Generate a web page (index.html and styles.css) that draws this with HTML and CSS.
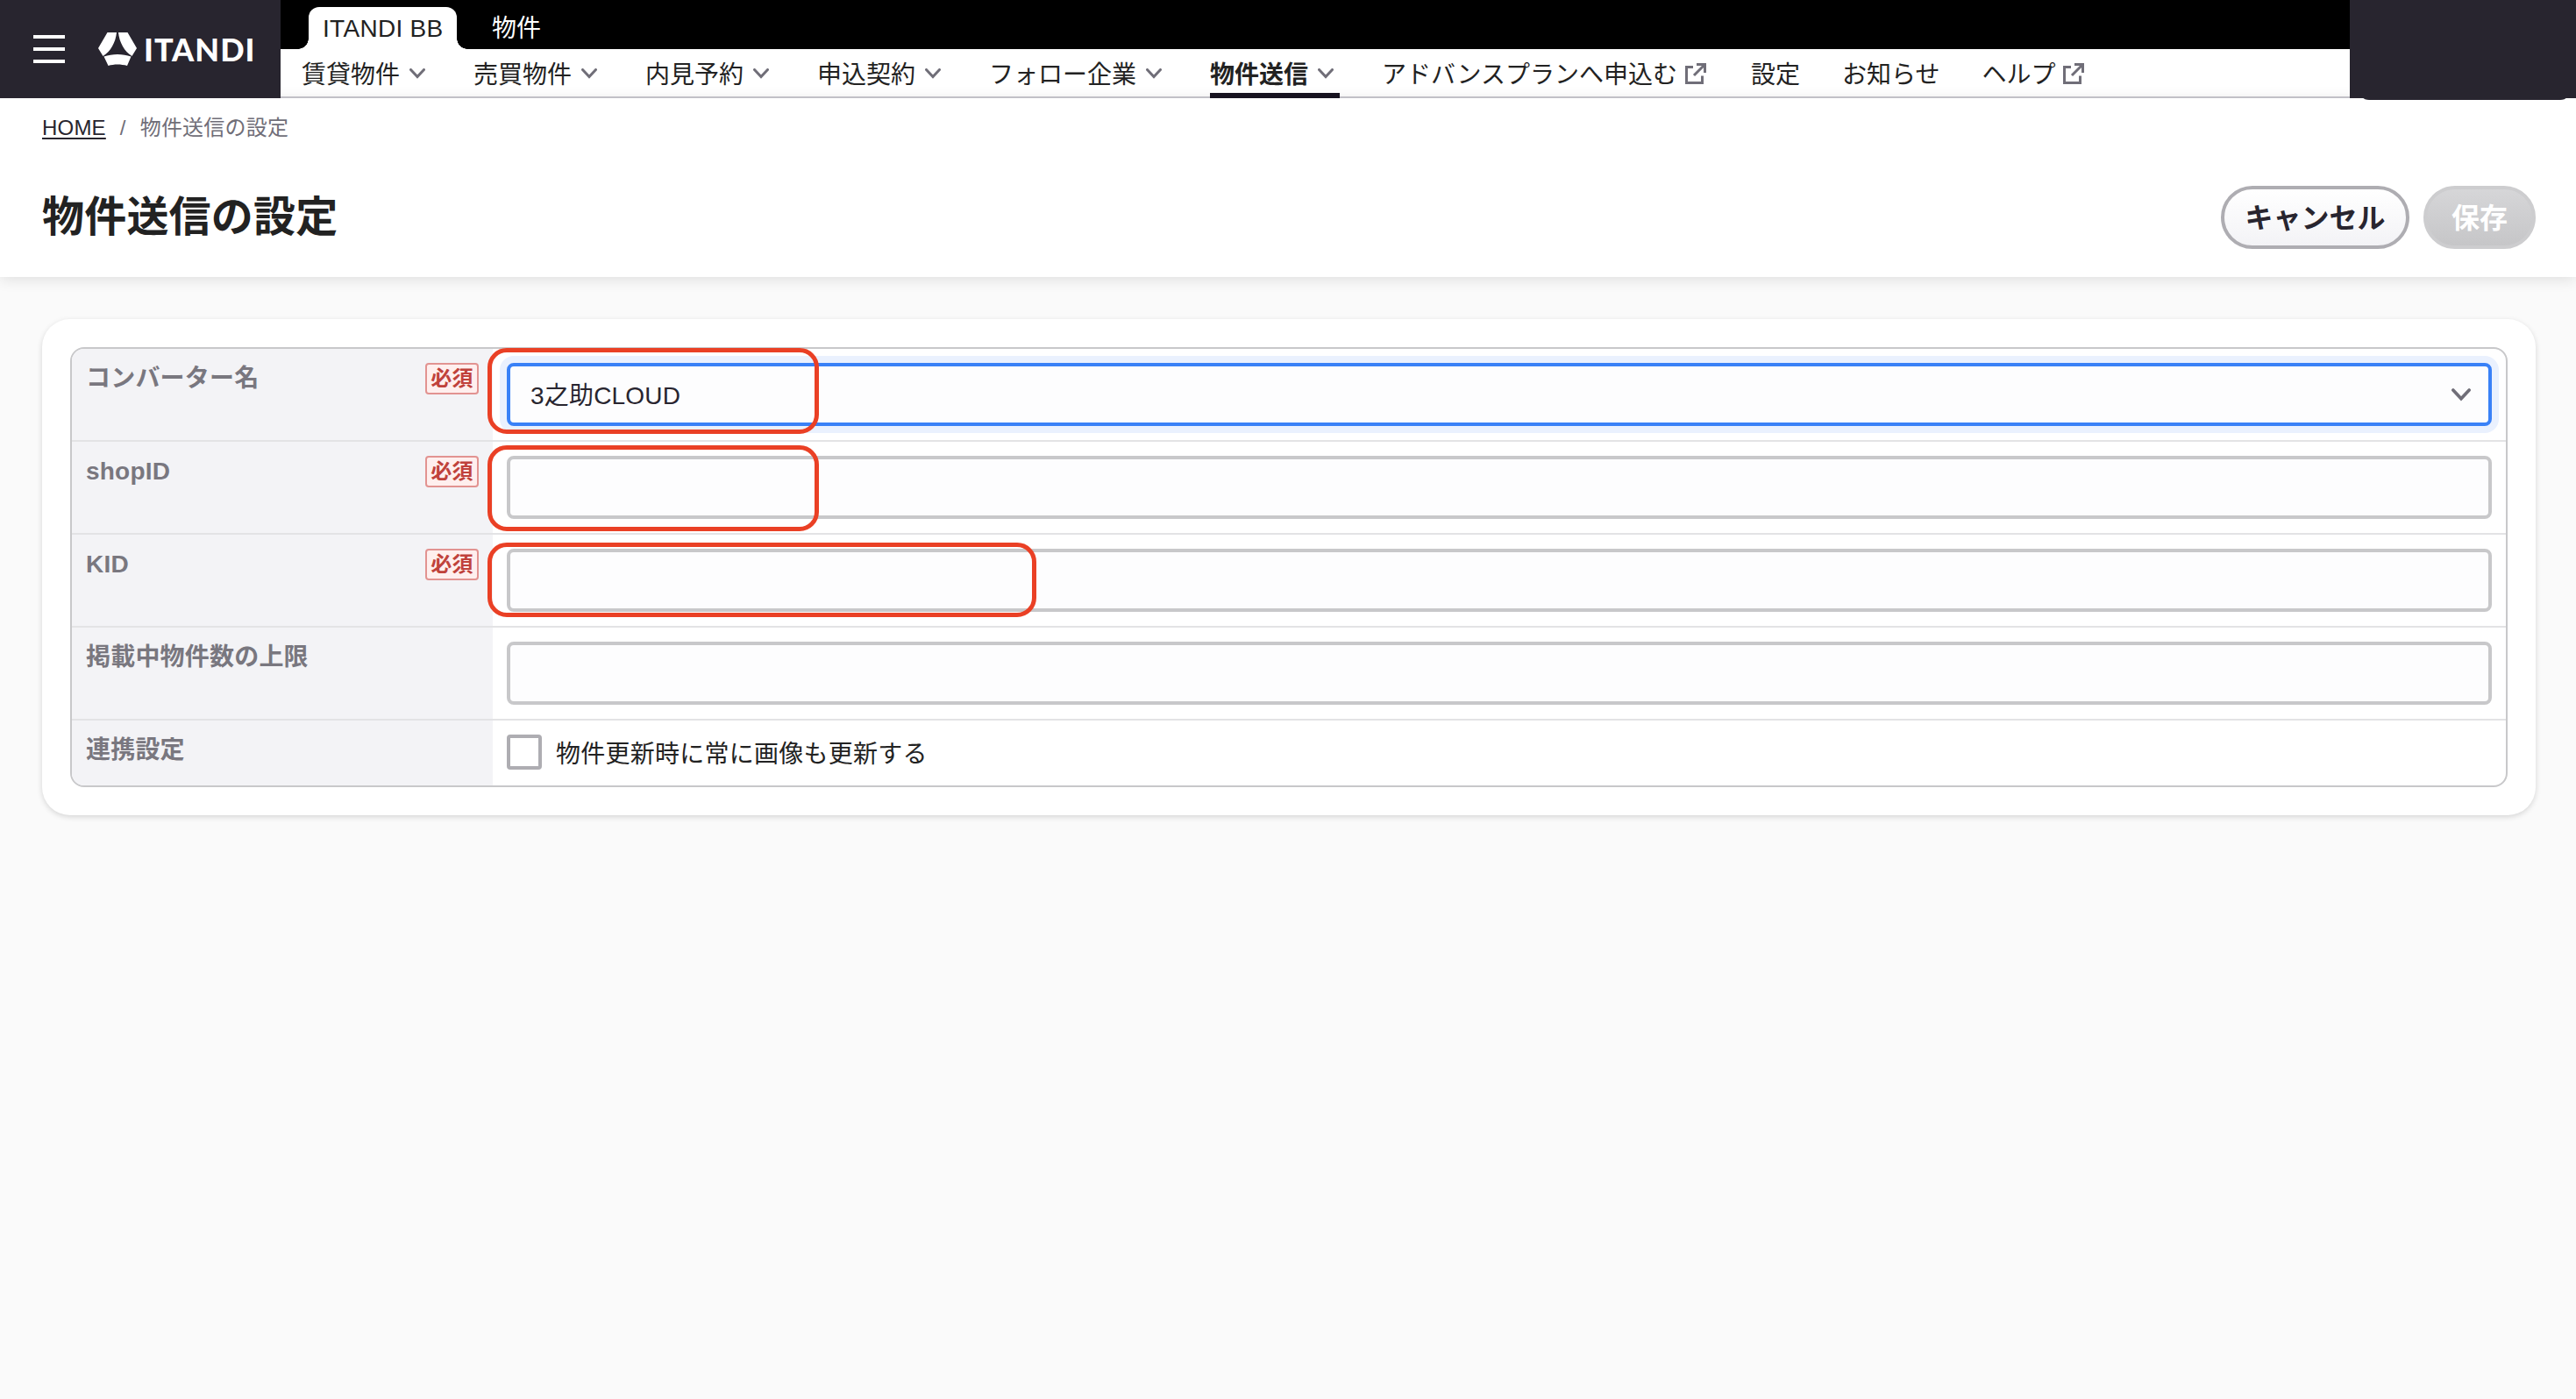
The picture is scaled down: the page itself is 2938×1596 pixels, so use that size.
FILE: index.html
```html
<!DOCTYPE html>
<html lang="ja">

<head>
    <meta charset="UTF-8">
    <meta name="viewport" content="width=device-width, initial-scale=1.0">
    <title>物件送信の設定</title>
    <link rel="stylesheet" href="styles.css">
</head>

<body>

    <svg class="symbols">
        <symbol id="chevron" viewBox="0 0 18 12">
            <path d="M1.5 1.5 L9 9.5 L16.5 1.5" fill="none" stroke="currentColor" stroke-width="3" stroke-linecap="round"/>
        </symbol>
        <symbol id="external" viewBox="0 0 24 24">
            <path d="M9 4.5 H1.5 V22.5 H19.5 V14.5 M13 1.5 H22.5 V11 M22 2 L10 14" fill="none" stroke="currentColor" stroke-width="3"/>
        </symbol>
    </svg>

    <header class="header">
        <div class="brand">
            <div class="menu-button">
                <span></span>
                <span></span>
                <span></span>
            </div>
            <svg class="logo-mark" viewBox="0 0 44 38">
                <path fill="#fff" d="M10.5 0 H21 C20 11 14 22 5.5 27 L0 18 Z M23 0 H33.5 L44 18 L38.5 27 C30 22 24 11 23 0 Z M6.5 27.500 C16 24 28 24 37.500 27.500 L33 38 C26 36 18 36 11.500 38 Z"/>
            </svg>
            <span class="logo-text">ITANDI</span>
        </div>
        <div class="header-main">
            <div class="tabs">
                <a class="tab active">ITANDI BB</a>
                <a class="tab">物件</a>
            </div>
            <nav class="nav">
                <a>賃貸物件<svg class="chevron"><use href="#chevron"/></svg></a>
                <a>売買物件<svg class="chevron"><use href="#chevron"/></svg></a>
                <a>内見予約<svg class="chevron"><use href="#chevron"/></svg></a>
                <a>申込契約<svg class="chevron"><use href="#chevron"/></svg></a>
                <a>フォロー企業<svg class="chevron"><use href="#chevron"/></svg></a>
                <a class="current">物件送信<svg class="chevron"><use href="#chevron"/></svg></a>
                <a>アドバンスプランへ申込む<svg class="external"><use href="#external"/></svg></a>
                <a>設定</a>
                <a>お知らせ</a>
                <a>ヘルプ<svg class="external"><use href="#external"/></svg></a>
            </nav>
        </div>
        <div class="account"></div>
    </header>

    <section class="page-head">
        <div class="breadcrumb">
            <a>HOME</a>
            <span class="slash">/</span>
            <span>物件送信の設定</span>
        </div>
        <div class="title-row">
            <h1>物件送信の設定</h1>
            <div class="buttons">
                <button class="cancel">キャンセル</button>
                <button class="save" disabled>保存</button>
            </div>
        </div>
    </section>

    <main class="card">
        <form class="settings">
            <div class="row">
                <div class="label">コンバーター名<span class="required">必須</span></div>
                <div class="field">
                    <div class="input select">3之助CLOUD<svg class="select-arrow"><use href="#chevron"/></svg></div>
                    <div class="mark mark-converter"></div>
                </div>
            </div>
            <div class="row">
                <div class="label">shopID<span class="required">必須</span></div>
                <div class="field">
                    <input class="input" type="text">
                    <div class="mark mark-shop"></div>
                </div>
            </div>
            <div class="row">
                <div class="label">KID<span class="required">必須</span></div>
                <div class="field">
                    <input class="input" type="text">
                    <div class="mark mark-kid"></div>
                </div>
            </div>
            <div class="row">
                <div class="label">掲載中物件数の上限</div>
                <div class="field"><input class="input" type="text"></div>
            </div>
            <div class="row">
                <div class="label">連携設定</div>
                <label class="field check"><input type="checkbox">物件更新時に常に画像も更新する</label>
            </div>
        </form>
    </main>

</body>

</html>
```
FILE: styles.css
```css
* {
    box-sizing: border-box;
}

body {
    margin: 0;
    min-height: 100vh;
    background-color: #fafafa;
    color: #222;
    font-family: "Liberation Sans", "Noto Sans CJK JP", sans-serif;
    font-size: 28px;
}

.symbols {
    display: none;
}

/* header */
.header {
    display: flex;
    height: 112px;
    background-color: #fff;
}

.brand {
    display: flex;
    align-items: center;
    width: 320px;
    padding-left: 38px;
    background-color: #28252f;
}

.menu-button {
    display: flex;
    flex-direction: column;
    gap: 10px;
    width: 36px;
    margin-right: 38px;
}

.menu-button span {
    height: 4px;
    background-color: #fff;
}

.logo-mark {
    width: 44px;
    height: 38px;
    margin-right: 8px;
}

.logo-text {
    color: #fff;
    font-family: Lato, sans-serif;
    font-size: 36px;
    font-weight: 900;
    line-height: 36px;
    letter-spacing: 1px;
}

.header-main {
    flex: 1;
}

.tabs {
    display: flex;
    height: 56px;
    padding: 8px 0 0 32px;
    background-color: #000;
}

.tab {
    height: 48px;
    padding: 0 16px;
    color: #fff;
    line-height: 50px;
}

.tab.active {
    position: relative;
    width: 169px;
    margin-right: 24px;
    border-radius: 12px 12px 0 0;
    background-color: #fff;
    color: #222;
    letter-spacing: 0.3px;
    white-space: nowrap;
}

.tab.active::before,
.tab.active::after {
    content: "";
    position: absolute;
    bottom: 0;
    width: 12px;
    height: 12px;
}

.tab.active::before {
    left: -12px;
    background: radial-gradient(circle at 0 0, #000 11.5px, #fff 12px);
}

.tab.active::after {
    right: -12px;
    background: radial-gradient(circle at 100% 0, #000 11.5px, #fff 12px);
}

.nav {
    display: flex;
    gap: 48px;
    height: 56px;
    padding-left: 24px;
    border-bottom: 2px solid #c1c0c7;
}

.nav a {
    display: flex;
    align-items: center;
    height: 56px;
    padding-bottom: 2px;
    white-space: nowrap;
}

.nav .current {
    border-bottom: 6px solid #16121f;
    padding-top: 4px;
    padding-bottom: 0;
    font-weight: bold;
}

.chevron {
    width: 18px;
    height: 12px;
    margin: 2px 7px 0 11px;
    color: #706e78;
}

.external {
    width: 24px;
    height: 24px;
    margin: 2px 3px 0 9px;
    color: #706e78;
}

.account {
    position: relative;
    width: 258px;
    background-color: #28252f;
}

.account::after {
    content: "";
    position: absolute;
    right: 6px;
    bottom: -2px;
    left: 10px;
    height: 12px;
    border-radius: 0 0 12px 12px;
    background-color: #28252f;
}

/* page head */
.page-head {
    height: 204px;
    padding: 19px 46px 0 48px;
    background-color: #fff;
    box-shadow: 0 2px 16px rgba(0, 0, 0, 0.12);
}

.breadcrumb {
    display: flex;
    height: 30px;
    color: #706e78;
    font-size: 24px;
    line-height: 30px;
    letter-spacing: 0.2px;
}

.breadcrumb a {
    color: #28252f;
    text-decoration: underline;
    text-underline-offset: 3px;
    text-decoration-thickness: 2px;
}

.slash {
    margin: 0 16px;
}

.title-row {
    display: flex;
    justify-content: space-between;
    margin-top: 51px;
}

h1 {
    margin: 0;
    font-size: 48px;
    line-height: 72px;
    letter-spacing: 0.2px;
}

.buttons {
    display: flex;
    gap: 16px;
}

button {
    height: 72px;
    padding: 0 0 4px;
    border: 4px solid #aeadb2;
    border-radius: 36px;
    font-family: inherit;
    font-size: 32px;
    font-weight: bold;
}

.cancel {
    width: 215px;
    background: linear-gradient(#fff, #f3f3f6);
    color: #28252f;
}

.save {
    width: 128px;
    border-color: #cdcdcf;
    background: linear-gradient(#d6d6d8, #c6c6c8);
    color: #fff;
}

/* settings form */
.card {
    margin: 48px 46px 0 48px;
    padding: 32px;
    border-radius: 32px;
    background-color: #fff;
    box-shadow: 0 2px 6px rgba(0, 0, 0, 0.15);
}

.settings {
    border: 2px solid #c8c8ca;
    border-radius: 16px;
}

.row {
    display: flex;
    height: 106px;
    border-bottom: 2px solid #e3e3e5;
}

.row:last-child {
    height: 74px;
    border-bottom: none;
}

.label {
    display: flex;
    justify-content: space-between;
    width: 480px;
    padding: 16px 16px 0;
    background-color: #f3f3f6;
    color: #79777f;
    font-weight: bold;
    line-height: 36px;
    letter-spacing: 0.2px;
}

.row:first-child .label {
    border-top-left-radius: 14px;
}

.row:last-child .label {
    border-bottom-left-radius: 14px;
}

.required {
    width: 61px;
    height: 36px;
    border: 2px solid #e29391;
    border-radius: 4px;
    background-color: #ffefee;
    color: #c0423b;
    font-size: 24px;
    line-height: 31px;
    text-align: center;
}

.field {
    position: relative;
    flex: 1;
    padding: 16px;
}

.input {
    display: block;
    width: 100%;
    height: 72px;
    border: 4px solid #c8c8ca;
    border-radius: 8px;
    background-color: #fdfdfe;
}

.select {
    display: flex;
    align-items: center;
    justify-content: space-between;
    padding: 0 20px 3px 23px;
    border-color: #3981f7;
    box-shadow: 0 0 0 8px #eaf1fe;
    color: #28252f;
    letter-spacing: 0.2px;
}

.select-arrow {
    width: 22px;
    height: 15px;
    margin-top: 3px;
    color: #706e78;
}

/* red highlight frames over the fields */
.mark {
    position: absolute;
    left: -6px;
    border: 5px solid #ea4025;
    border-radius: 22px;
    pointer-events: none;
}

.mark-converter {
    top: -1px;
    width: 378px;
    height: 98px;
}

.mark-shop {
    top: 4px;
    width: 378px;
    height: 98px;
}

.mark-kid {
    top: 9px;
    width: 626px;
    height: 85px;
}

.check {
    display: flex;
    align-items: center;
    height: 72px;
    letter-spacing: 0.25px;
}

.check input {
    appearance: none;
    width: 40px;
    height: 40px;
    margin: 0 16px 0 0;
    border: 4px solid #aeadb2;
    border-radius: 4px;
    background-color: #fff;
}
```
